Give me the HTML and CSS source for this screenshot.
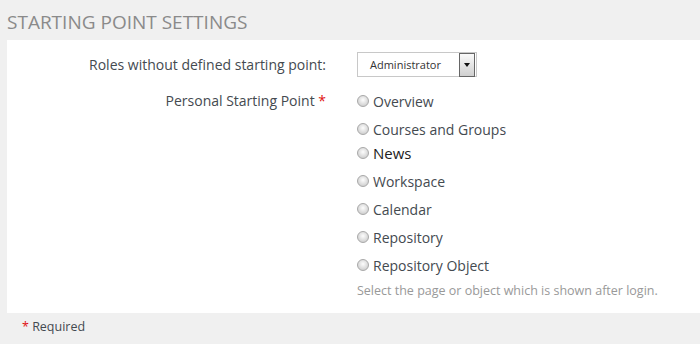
FILE: index.html
```html
<!DOCTYPE html>
<html lang="en">
<head>
  <meta charset="UTF-8" />
  <title>Starting Point Settings</title>
  <link rel="stylesheet" href="styles.css">
</head>
<body>
  <h2 class="section-title">Starting Point Settings</h2>

  <form class="panel">
    <div class="form-row roles-row">
      <label class="form-label">Roles without defined starting point:</label>
      <div class="form-control">
        <div class="select">
          <span class="select-value">Administrator</span>
          <span class="select-btn"><span class="arrow"></span></span>
        </div>
      </div>
    </div>

    <div class="form-row">
      <label class="form-label">Personal Starting Point <span class="req">*</span></label>
      <div class="form-control">
        <label class="radio"><input type="radio" name="start" /> Overview</label>
        <label class="radio"><input type="radio" name="start" /> Courses and Groups</label>
        <label class="radio news"><input type="radio" name="start" /> News</label>
        <label class="radio"><input type="radio" name="start" /> Workspace</label>
        <label class="radio"><input type="radio" name="start" /> Calendar</label>
        <label class="radio"><input type="radio" name="start" /> Repository</label>
        <label class="radio"><input type="radio" name="start" /> Repository Object</label>
        <p class="help">Select the page or object which is shown after login.</p>
      </div>
    </div>
  </form>

  <p class="required"><span class="req">*</span> Required</p>
</body>
</html>
```

FILE: styles.css
```css
body {
  margin: 0;
  background-color: #f0f0f0;
  font-family: "Open Sans", "Liberation Sans", sans-serif;
  font-size: 14px;
  color: #444a50;
}
.section-title {
  margin: 0;
  padding: 9px 7px 0;
  height: 31px;
  font-size: 19px;
  line-height: 26px;
  font-weight: normal;
  text-transform: uppercase;
  color: #8a8a8a;
}
.panel {
  background-color: #fff;
  margin-left: 7px;
  padding: 12px 0 14px;
}
.form-row {
  display: grid;
  grid-template-columns: 319px 1fr;
  column-gap: 31px;
}
.roles-row {
  margin-bottom: 10px;
}
.form-label {
  text-align: right;
  line-height: 28px;
}
.roles-row .form-label {
  line-height: 25px;
}
.req {
  color: #e01010;
}
.select {
  display: flex;
  align-items: center;
  width: 118px;
  height: 23px;
  border: 1px solid #c8c8c8;
  background-color: #fff;
}
.select-value {
  flex: 1;
  padding-left: 12px;
  font-size: 11px;
  color: #333;
}
.select-btn {
  display: flex;
  align-items: center;
  justify-content: center;
  width: 14px;
  height: 22px;
  margin-right: 1px;
  border: 1px solid #666;
  background: linear-gradient(#fafafa, #cfcfcf);
}
.arrow {
  width: 0;
  height: 0;
  border-left: 3px solid transparent;
  border-right: 3px solid transparent;
  border-top: 4px solid #111;
}
.radio {
  display: flex;
  align-items: center;
  height: 28px;
}
.radio input {
  appearance: none;
  width: 12px;
  height: 12px;
  margin: 0 4px 0 0;
  border: 1px solid #a8a8a8;
  border-radius: 50%;
  background: radial-gradient(circle at 50% 40%, #fdfdfd, #d4d4d4 70%);
}
.radio.news {
  margin-top: -4px;
  font-size: 15px;
  color: #222;
}
.help {
  margin: 3px 0 0;
  font-size: 12.5px;
  color: #999;
}
.required {
  margin: 5px 0 0 22px;
  font-size: 12.5px;
}
```
